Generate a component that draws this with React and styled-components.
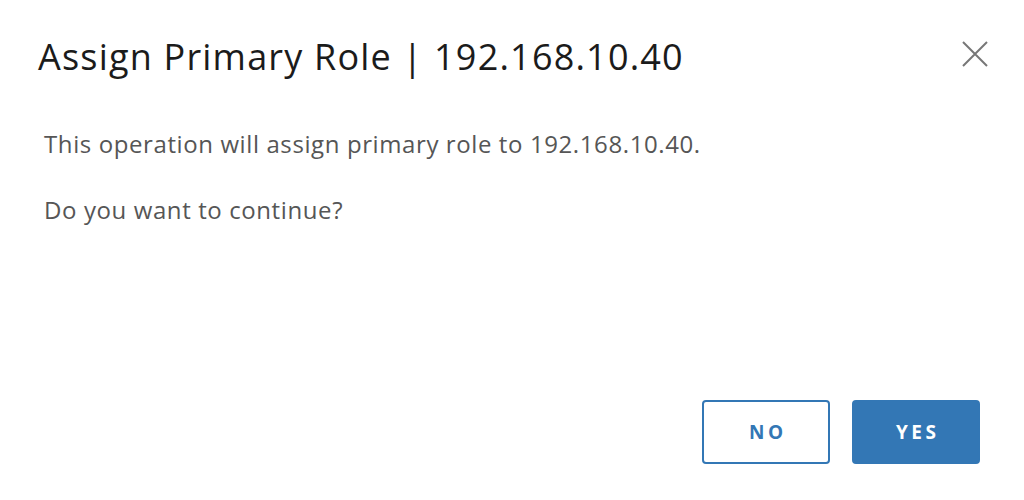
import React from "react";
import styled, { createGlobalStyle } from "styled-components";

const Global = createGlobalStyle`
  html, body {
    margin: 0;
    padding: 0;
    background: #fff;
  }
  body {
    font-family: "Open Sans", Lato, sans-serif;
  }
`;

export default function App() {
  return (
    <>
      <Global />
      <Modal>
        <Header>
          <Title>Assign Primary Role | 192.168.10.40</Title>
          <Close aria-label="Close">
            <svg width="26" height="26" viewBox="0 0 26 26">
              <path
                d="M1 1 L25 25 M25 1 L1 25"
                stroke="#777"
                strokeWidth="2"
                fill="none"
              />
            </svg>
          </Close>
        </Header>
        <Body>
          <Text>This operation will assign primary role to 192.168.10.40.</Text>
          <Text>Do you want to continue?</Text>
        </Body>
        <Footer>
          <Button>NO</Button>
          <Button primary>YES</Button>
        </Footer>
      </Modal>
    </>
  );
}

const Modal = styled.div`
  width: 1024px;
  height: 500px;
  box-sizing: border-box;
  padding: 33px 44px 36px 38px;
  display: flex;
  flex-direction: column;
`;

const Header = styled.div`
  display: flex;
  align-items: flex-start;
  justify-content: space-between;
`;

const Title = styled.h1`
  margin: 0;
  font-family: "Open Sans", sans-serif;
  font-size: 36px;
  font-weight: 400;
  line-height: 48px;
  letter-spacing: 1.2px;
  color: #1b1b1b;
`;

const Close = styled.button`
  border: none;
  background: none;
  padding: 0;
  margin-top: 8px;
  margin-right: -8px;
  cursor: pointer;
  display: flex;
`;

const Body = styled.div`
  padding: 47px 0 0 6px;
  display: flex;
  flex-direction: column;
  gap: 34px;
  flex: 1;
`;

const Text = styled.p`
  margin: 0;
  font-family: "Open Sans", sans-serif;
  font-size: 24px;
  line-height: 32px;
  letter-spacing: 0.6px;
  color: #565656;
`;

const Footer = styled.div`
  display: flex;
  justify-content: flex-end;
  gap: 22px;
`;

const Button = styled.button`
  width: 128px;
  height: 64px;
  box-sizing: border-box;
  border-radius: 4px;
  border: 2px solid #3377b5;
  background: ${(p) => (p.primary ? "#3377b5" : "#fff")};
  color: ${(p) => (p.primary ? "#fff" : "#3377b5")};
  font-family: "Open Sans", sans-serif;
  font-size: 19px;
  font-weight: 700;
  letter-spacing: 3.5px;
  padding: 0 0 0 3.5px;
  cursor: pointer;
`;
